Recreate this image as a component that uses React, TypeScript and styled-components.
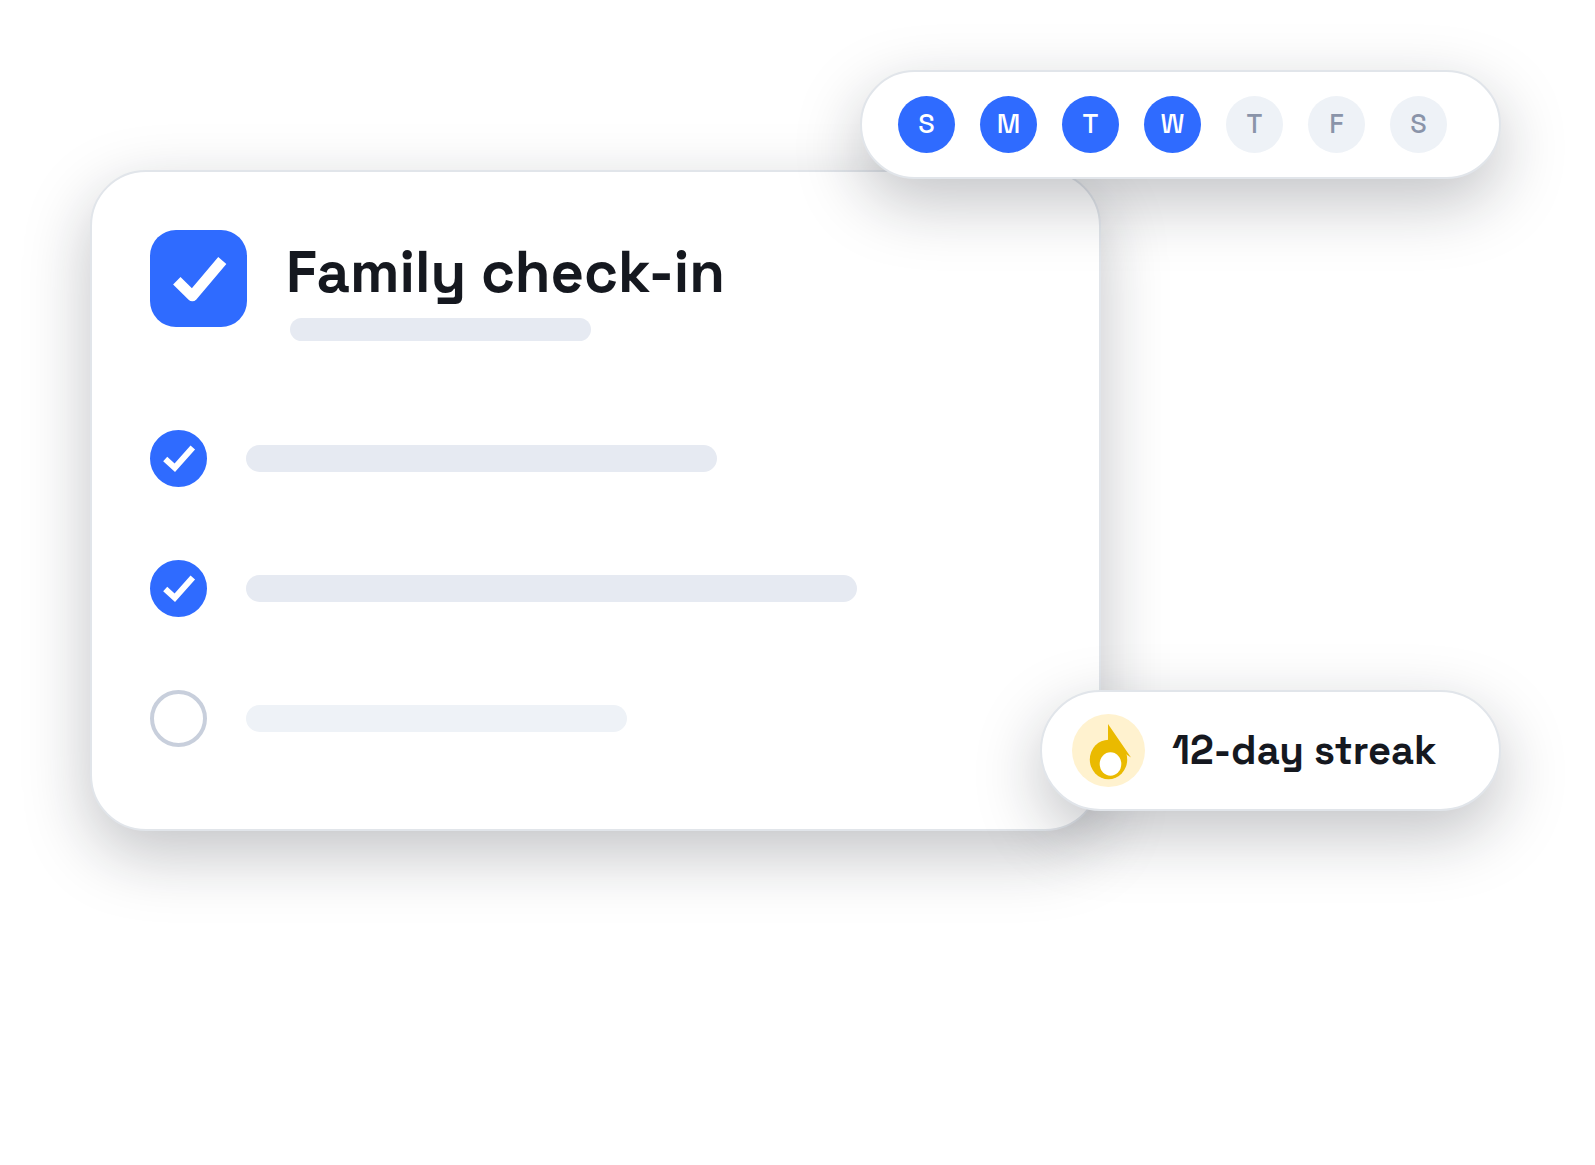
import React from "react";
import styled, { createGlobalStyle } from "styled-components";

const color = {
  ink: "#15181f",
  blue: "#2f6bff",
  line: "#e1e5ea",
  bar: "#e6eaf2",
  barSoft: "#eef2f7",
  ring: "#c8cfdc",
  muted: "#8a94a9",
  cream: "#fff2cf",
  gold: "#eaba00",
};

const GlobalStyle = createGlobalStyle`
  *, *::before, *::after { box-sizing: border-box; }
  body {
    margin: 0;
    background: #fff;
    color: ${color.ink};
    font-family: "Space Grotesk", Inter, "Liberation Sans", sans-serif;
  }
`;

const Page = styled.main`
  min-height: 100vh;
  padding: 70px 94px 100px 90px;
`;

const Stage = styled.div`
  position: relative;
  padding-top: 100px;
`;

const Surface = styled.section`
  background: #fff;
  border: 2px solid ${color.line};
  box-shadow: 0 23px 66px rgba(20, 24, 36, 0.26);
`;

const Card = styled(Surface)`
  margin-right: 400px;
  padding: 58px 58px 82px;
  border-radius: 56px;
`;

const Header = styled.header`
  display: flex;
  align-items: flex-start;
  gap: 39px;
  margin-bottom: 89px;
`;

const AppBadge = styled.div`
  flex: none;
  width: 97px;
  height: 97px;
  border-radius: 26px;
  background: ${color.blue};
`;

const Heading = styled.div`
  display: flex;
  flex-direction: column;
  gap: 14px;
  padding-top: 10px;
`;

const Title = styled.h1`
  margin: 0;
  font-size: 58px;
  line-height: 64px;
  font-weight: 600;
  white-space: nowrap;
`;

const Bar = styled.span<{ $width: number; $height: number; $soft?: boolean }>`
  display: block;
  width: ${(p) => p.$width}px;
  height: ${(p) => p.$height}px;
  border-radius: 14px;
  background: ${(p) => (p.$soft ? color.barSoft : color.bar)};
`;

const Subtitle = styled.div`
  padding-left: 4px;
`;

const TaskList = styled.ul`
  display: flex;
  flex-direction: column;
  gap: 73px;
  margin: 0;
  padding: 0;
  list-style: none;
`;

const Task = styled.label`
  display: flex;
  align-items: center;
  gap: 39px;
  cursor: pointer;
`;

const Tick = styled.span`
  display: grid;
  flex: none;
  width: 57px;
  height: 57px;

  > * {
    grid-area: 1 / 1;
  }

  > svg {
    pointer-events: none;
    visibility: hidden;
  }

  > input:checked + svg {
    visibility: visible;
  }
`;

const TickBox = styled.input`
  appearance: none;
  width: 57px;
  height: 57px;
  margin: 0;
  border: 4px solid ${color.ring};
  border-radius: 50%;
  background: #fff;
  cursor: pointer;

  &:checked {
    border-color: ${color.blue};
    background: ${color.blue};
  }
`;

const WeekPill = styled(Surface)`
  position: absolute;
  top: 0;
  right: 0;
  padding: 24px 52px 24px 36px;
  border-radius: 55px;
`;

const Days = styled.ol`
  display: flex;
  gap: 25px;
  margin: 0;
  padding: 0;
  list-style: none;
`;

const Day = styled.li<{ $done: boolean }>`
  width: 57px;
  height: 57px;
  border-radius: 50%;
  background: ${(p) => (p.$done ? color.blue : color.barSoft)};
  color: ${(p) => (p.$done ? "#fff" : color.muted)};
  font-size: 27px;
  line-height: 55px;
  font-weight: 500;
  text-align: center;
`;

const StreakPill = styled(Surface)`
  position: absolute;
  right: 0;
  bottom: 20px;
  display: flex;
  align-items: center;
  gap: 27px;
  min-width: 461px;
  padding: 22px 30px;
  border-radius: 61px;
`;

const StreakText = styled.p`
  margin: 0;
  font-size: 40px;
  line-height: 48px;
  font-weight: 600;
  white-space: nowrap;
`;

const Flame = () => (
  <svg width="73" height="73" viewBox="0 0 73 73" aria-hidden="true">
    <circle cx="36.5" cy="36.5" r="36.5" fill={color.cream} />
    <ellipse cx="36.5" cy="45.5" rx="18.7" ry="19.8" fill={color.gold} />
    <path d="M36 10 L59 43.5 L53 39.5 L36 34 Z" fill={color.gold} />
    <ellipse cx="38.5" cy="50" rx="10.8" ry="11.8" fill="#fff" />
  </svg>
);

const days = [
  { letter: "S", done: true },
  { letter: "M", done: true },
  { letter: "T", done: true },
  { letter: "W", done: true },
  { letter: "T", done: false },
  { letter: "F", done: false },
  { letter: "S", done: false },
];

const tasks = [
  { name: "First task", width: 471, done: true },
  { name: "Second task", width: 611, done: true },
  { name: "Third task", width: 381, done: false },
];

export default function App() {
  return (
    <>
      <GlobalStyle />
      <Page>
        <Stage>
          <Card>
            <Header>
              <AppBadge>
                <svg width="97" height="97" viewBox="0 0 97 97" aria-hidden="true">
                  <path
                    d="M26.8 50.8 L42.3 66 L72.3 30.5"
                    fill="none"
                    stroke="#fff"
                    strokeWidth="10.6"
                    strokeLinejoin="round"
                  />
                </svg>
              </AppBadge>
              <Heading>
                <Title>Family check-in</Title>
                <Subtitle>
                  <Bar $width={301} $height={23} />
                </Subtitle>
              </Heading>
            </Header>
            <TaskList>
              {tasks.map((task) => (
                <li key={task.name}>
                  <Task>
                    <Tick>
                      <TickBox type="checkbox" aria-label={task.name} defaultChecked={task.done} />
                      <svg width="57" height="57" viewBox="0 0 57 57" aria-hidden="true">
                        <path
                          d="M15.2 29 L24.8 37.8 L42.8 17.4"
                          fill="none"
                          stroke="#fff"
                          strokeWidth="6"
                        />
                      </svg>
                    </Tick>
                    <Bar $width={task.width} $height={27} $soft={!task.done} />
                  </Task>
                </li>
              ))}
            </TaskList>
          </Card>
          <WeekPill>
            <Days>
              {days.map((day, i) => (
                <Day key={i} $done={day.done}>
                  {day.letter}
                </Day>
              ))}
            </Days>
          </WeekPill>
          <StreakPill>
            <Flame />
            <StreakText>12-day streak</StreakText>
          </StreakPill>
        </Stage>
      </Page>
    </>
  );
}
